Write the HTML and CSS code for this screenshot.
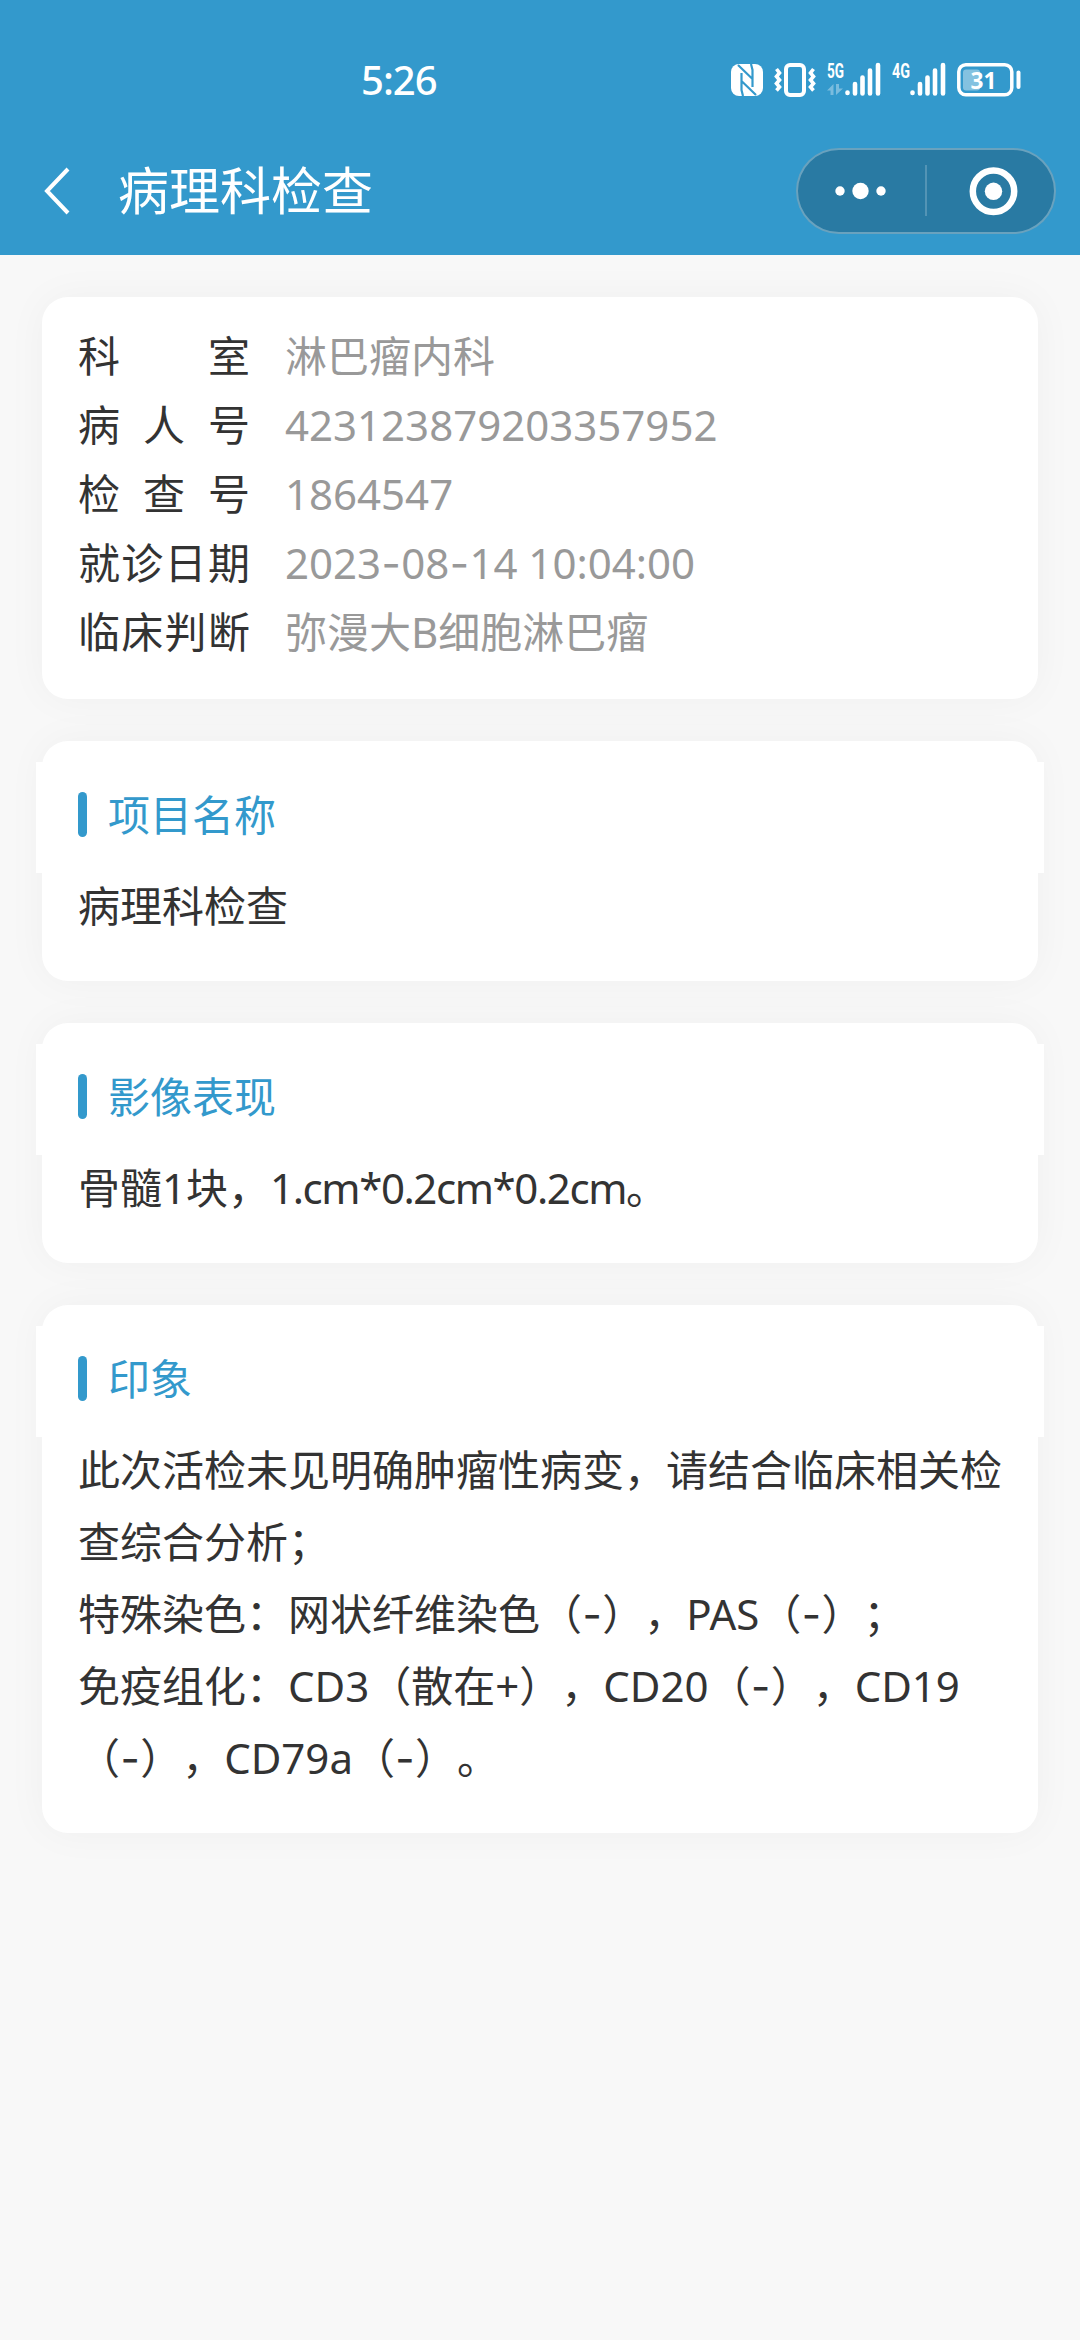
FILE: index.html
```
<!DOCTYPE html>
<html lang="zh-CN">
<head>
    <meta charset="UTF-8">
    <meta name="viewport" content="width=device-width, initial-scale=1.0">
    <title>病理科检查</title>
    <link rel="stylesheet" href="styles.css">
</head>
<body>

    <header class="header">
        <div class="status-bar">
            <span class="time">5:26</span>
            <div class="status-icons">
                <!-- NFC -->
                <svg class="icon-nfc" width="32" height="32" viewBox="0 0 32 32">
                    <rect width="32" height="32" rx="8" fill="#fff"/>
                    <path d="M7 1 L21.500 15 V6 L20 0 M25 31 L10.500 17 V26 L12 32 M10.500 17 V9 M21.500 15 V23" fill="none" stroke="#3399cc" stroke-width="2.200"/>
                </svg>
                <!-- vibrate -->
                <svg class="icon-vibrate" width="42" height="34" viewBox="0 0 42 34">
                    <rect x="12" y="2" width="18" height="30" rx="4" fill="none" stroke="#fff" stroke-width="4"/>
                    <path d="M2.500 6 l3 4 -3 3.500 3 3.500 -3 3.500 3 3.500 -3 3.500 M39.500 6 l-3 4 3 3.500 -3 3.500 3 3.500 -3 3.500 3 3.500" fill="none" stroke="#fff" stroke-width="3.600"/>
                </svg>
                <!-- 5G signal -->
                <svg class="icon-signal" width="54" height="34" viewBox="0 0 54 34">
                    <text x="0" y="15" class="net" textLength="17" lengthAdjust="spacingAndGlyphs">5G</text>
                    <path d="M0 27.500 L6.500 21 V32 H3.500 V27.500 Z M9 21 H12 V25.500 H16 L9 32 Z" fill="#fff" fill-opacity=".35"/>
                    <path d="M20.500 29.500V30M28 21V30.500M35.500 14.500V30.500M43 7.500V30.500M51 2V30.500" stroke="#fff" stroke-width="4.600" stroke-linecap="round"/>
                </svg>
                <!-- 4G signal -->
                <svg class="icon-signal" width="54" height="34" viewBox="0 0 54 34">
                    <text x="0" y="15" class="net" textLength="18" lengthAdjust="spacingAndGlyphs">4G</text>
                    <path d="M20.500 29.500V30M28 21V30.500M35.500 14.500V30.500M43 7.500V30.500M51 2V30.500" stroke="#fff" stroke-width="4.600" stroke-linecap="round"/>
                </svg>
                <!-- battery -->
                <svg class="icon-battery" width="64" height="34" viewBox="0 0 64 34">
                    <rect x="1.800" y="1.800" width="53" height="30" rx="7" fill="none" stroke="#fff" stroke-width="3.500"/>
                    <rect x="6" y="6.500" width="17" height="21" rx="3" fill="#fff" fill-opacity=".4"/>
                    <path d="M61.500 9.500V24" stroke="#fff" stroke-width="4" stroke-linecap="round"/>
                    <text x="13.500" y="25.500" class="level" textLength="26" lengthAdjust="spacingAndGlyphs">31</text>
                </svg>
            </div>
        </div>
        <div class="nav-bar">
            <svg class="back" width="30" height="50" viewBox="0 0 30 50">
                <path d="M25 3 L4 25 L25 47" fill="none" stroke="#fff" stroke-width="4"/>
            </svg>
            <h1 class="title">病理科检查</h1>
            <div class="capsule">
                <svg width="256" height="82" viewBox="0 0 256 82">
                    <circle cx="42" cy="41" r="4.700" fill="#fff"/>
                    <circle cx="62.500" cy="41" r="8.200" fill="#fff"/>
                    <circle cx="83" cy="41" r="4.700" fill="#fff"/>
                    <rect x="127.500" y="15" width="1" height="51" fill="#fff" fill-opacity=".4"/>
                    <circle cx="195.500" cy="41.300" r="20.700" fill="none" stroke="#fff" stroke-width="6.500"/>
                    <circle cx="195.500" cy="41.300" r="8.700" fill="#fff"/>
                </svg>
            </div>
        </div>
    </header>

    <main class="content">
        <section class="card info">
            <div class="row"><span class="label">科 室</span><span class="value">淋巴瘤内科</span></div>
            <div class="row"><span class="label">病 人 号</span><span class="value">423123879203357952</span></div>
            <div class="row"><span class="label">检 查 号</span><span class="value">1864547</span></div>
            <div class="row"><span class="label full">就诊日期</span><span class="value">2023<span class="dash">-</span>08<span class="dash">-</span>14 10:04:00</span></div>
            <div class="row"><span class="label full">临床判断</span><span class="value">弥漫大B细胞淋巴瘤</span></div>
        </section>

        <section class="card">
            <h2 class="card-head">项目名称</h2>
            <div class="card-body">病理科检查</div>
        </section>

        <section class="card">
            <h2 class="card-head">影像表现</h2>
            <div class="card-body">骨髓1块，<span class="size">1.cm*0.2cm*0.2cm</span>。</div>
        </section>

        <section class="card">
            <h2 class="card-head">印象</h2>
            <div class="card-body">
                此次活检未见明确肿瘤性病变，请结合临床相关检查综合分析；<br>
                特殊染色：网状纤维染色（<span class="dash">-</span>），PAS（<span class="dash">-</span>）；<br>
                免疫组化：CD3（散在+），CD20（<span class="dash">-</span>），CD19（<span class="dash">-</span>），CD79a（<span class="dash">-</span>）。
            </div>
        </section>
    </main>

</body>
</html>
```

FILE: styles.css
```
* {
    box-sizing: border-box;
}
body {
    margin: 0;
    min-height: 2340px;
    background-color: #f8f8f8;
    color: #333;
    font-family: "Noto Sans", "Noto Sans CJK SC", sans-serif;
    font-size: 42px;
    text-spacing-trim: space-all;
}
h1, h2 {
    margin: 0;
    font-weight: normal;
}

/* header */
.header {
    height: 255px;
    background-color: #3399cc;
    color: #fff;
}
.status-bar {
    display: flex;
    align-items: center;
    justify-content: space-between;
    height: 127px;
    padding: 32px 59px 0 361px;
}
.time {
    font-size: 40px;
    font-weight: 500;
    line-height: 60px;
    letter-spacing: -1px;
}
.status-icons {
    display: flex;
    align-items: center;
    gap: 11px;
}
.status-icons svg {
    overflow: visible;
}
.net {
    fill: #fff;
    font-family: "Roboto", sans-serif;
    font-size: 20px;
    font-weight: 700;
}
.level {
    fill: #fff;
    font-family: "Noto Sans", sans-serif;
    font-size: 24px;
    font-weight: 700;
}
.nav-bar {
    display: flex;
    align-items: center;
    height: 128px;
    padding: 0 24px 0 43px;
}
.title {
    margin-left: 45px;
    padding-bottom: 2px;
    font-size: 51px;
    line-height: 70px;
}
.capsule {
    margin-left: auto;
    width: 260px;
    height: 86px;
    border: 2px solid rgba(255, 255, 255, 0.3);
    border-radius: 43px;
    background-color: #297aa3;
}
.capsule svg {
    display: block;
}

/* cards */
.content {
    display: flex;
    flex-direction: column;
    gap: 42px;
    padding: 42px;
}
.card {
    padding: 21px 36px 36px;
    border-radius: 26px;
    background-color: #fff;
    box-shadow: 0 0 42px rgba(0, 0, 0, 0.04);
}
.info {
    height: 402px;
    padding-top: 24px;
}
.row {
    display: flex;
    line-height: 69px;
}
.label {
    width: 172px;
    height: 69px;
    margin-right: 35px;
    text-align: justify;
    text-align-last: justify;
}
/* four characters already fill the column */
.full {
    text-align-last: left;
    letter-spacing: 1.3px;
    white-space: nowrap;
}
.value {
    color: #999;
}
.dash {
    padding: 0 0.4px;
    font-family: "Inter", sans-serif;
    line-height: 1;
}
.size {
    letter-spacing: -1.4px;
}
.card-head {
    display: flex;
    align-items: center;
    height: 111px;
    margin: 0 -42px;
    padding: 0 42px 6px;
    background-color: #fff;
    color: #3399cc;
    font-size: 42px;
    line-height: 60px;
}
.card-head::before {
    content: "";
    width: 9px;
    height: 45px;
    margin-right: 21px;
    border-radius: 5px;
    background-color: #3399cc;
}
.card-body {
    margin-top: -3px;
    padding-bottom: 3px;
    line-height: 72px;
}
```
